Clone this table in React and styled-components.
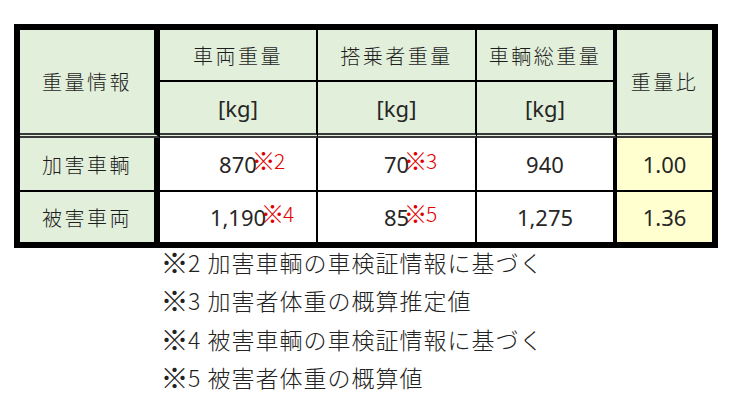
import React from "react";
import styled, { createGlobalStyle } from "styled-components";

const GlobalStyle = createGlobalStyle`
  body {
    margin: 0;
    background: #fff;
    font-family: "Noto Sans CJK JP", "Noto Sans", sans-serif;
    font-weight: 300;
    color: #1e1e1e;
  }
`;

const Page = styled.div`
  padding: 24px 0 0 14px;
`;

const Table = styled.table`
  border-collapse: separate;
  border-spacing: 0;
  border: 6px solid #000;
  table-layout: fixed;
`;

const Cell = styled.td`
  box-sizing: border-box;
  padding: 0;
  text-align: center;
  vertical-align: middle;
  background: ${(p) => (p.$tone === "head" ? "#e2efda" : p.$tone === "ratio" ? "#ffffd0" : "#fff")};
  width: ${(p) => p.$w}px;
  height: ${(p) => p.$h}px;
  border-right: ${(p) => (p.$right ? `${p.$right}px solid #000` : "none")};
  border-bottom: ${(p) =>
    p.$double ? "5px double #3a3a3a" : p.$bottom ? `${p.$bottom}px solid #000` : "none"};
  font-size: 20px;
  letter-spacing: ${(p) => (p.$num ? "0" : "2.5px")};
  font-family: ${(p) =>
    p.$num ? `"Noto Sans", "Noto Sans CJK JP", sans-serif` : `"Noto Sans CJK JP", sans-serif`};
  ${(p) => p.$num && "font-size: 22px; font-weight: 400; color: #262626;"}
`;

const Value = styled.span`
  position: relative;
  display: inline-block;
`;

const Mark = styled.span`
  position: absolute;
  left: calc(100% - 4px);
  top: -4px;
  color: #e00000;
  font-size: 21px;
  font-weight: 300;
  white-space: nowrap;
  font-family: "Noto Sans CJK JP", sans-serif;
`;

const Kome = styled.span`
  display: inline-block;
  transform: scale(${(p) => p.$scale || 1.22});
  transform-origin: 45% 55%;
  margin-right: ${(p) => p.$gap || 0}px;
`;

const Notes = styled.div`
  margin: -5px 0 0 149px;
  font-size: 23px;
  line-height: 38.3px;
  letter-spacing: 1px;
  color: #222;
`;

const widths = [140, 158, 159, 140, 95];

const rows = [
  { label: "加害車輌", car: "870", carMark: "2", pax: "70", paxMark: "3", total: "940", ratio: "1.00" },
  { label: "被害車両", car: "1,190", carMark: "4", pax: "85", paxMark: "5", total: "1,275", ratio: "1.36" },
];

const notes = [
  ["2", "加害車輌の車検証情報に基づく"],
  ["3", "加害者体重の概算推定値"],
  ["4", "被害車輌の車検証情報に基づく"],
  ["5", "被害者体重の概算値"],
];

function Num({ v, mark }) {
  return (
    <Value>
      {v}
      {mark && (
        <Mark>
          <Kome $scale={1.12}>※</Kome>
          {mark}
        </Mark>
      )}
    </Value>
  );
}

export default function App() {
  return (
    <Page>
      <GlobalStyle />
      <Table>
        <tbody>
          <tr>
            <Cell $tone="head" rowSpan={2} $w={widths[0]} $right={6} $double>
              重量情報
            </Cell>
            <Cell $tone="head" $w={widths[1]} $h={52} $right={2} $bottom={2}>車両重量</Cell>
            <Cell $tone="head" $w={widths[2]} $right={2} $bottom={2}>搭乗者重量</Cell>
            <Cell $tone="head" $w={widths[3]} $right={4} $bottom={2}>車輌総重量</Cell>
            <Cell $tone="head" rowSpan={2} $w={widths[4]} $double>重量比</Cell>
          </tr>
          <tr>
            <Cell $tone="head" $num $h={56} $right={2} $double>[kg]</Cell>
            <Cell $tone="head" $num $right={2} $double>[kg]</Cell>
            <Cell $tone="head" $num $right={4} $double>[kg]</Cell>
          </tr>
          {rows.map((r, i) => {
            const last = i === rows.length - 1;
            const b = last ? 0 : 2;
            return (
              <tr key={r.label}>
                <Cell $tone="head" $h={last ? 50 : 54} $right={6} $bottom={b}>{r.label}</Cell>
                <Cell $num $right={2} $bottom={b}><Num v={r.car} mark={r.carMark} /></Cell>
                <Cell $num $right={2} $bottom={b}><Num v={r.pax} mark={r.paxMark} /></Cell>
                <Cell $num $right={4} $bottom={b}>{r.total}</Cell>
                <Cell $num $tone="ratio" $bottom={b}>{r.ratio}</Cell>
              </tr>
            );
          })}
        </tbody>
      </Table>
      <Notes>
        {notes.map(([n, text]) => (
          <div key={n}>
            <Kome $gap={1}>※</Kome>
            {n} {text}
          </div>
        ))}
      </Notes>
    </Page>
  );
}
